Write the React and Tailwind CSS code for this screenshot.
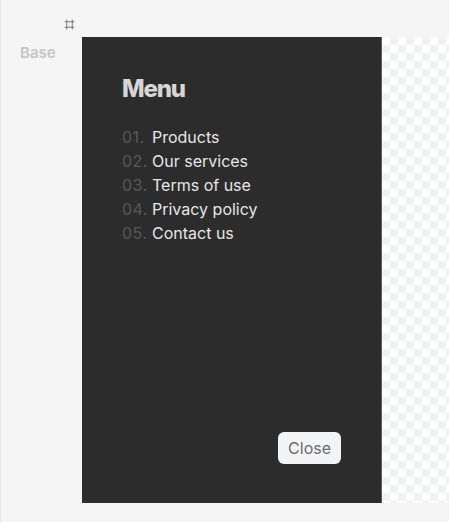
import { Frame } from "lucide-react";

const items = [
  { num: "01.", label: "Products" },
  { num: "02.", label: "Our services" },
  { num: "03.", label: "Terms of use" },
  { num: "04.", label: "Privacy policy" },
  { num: "05.", label: "Contact us" },
];

const App = () => {
  return (
    <div className="relative flex w-[449px] h-[522px] overflow-hidden border-l border-[#e4e4e4] bg-[#f5f5f5] font-['Inter',sans-serif]">
      {/* frame marker */}
      <Frame className="absolute left-[63px] top-[19px] w-[11px] h-[11px] text-[#707070]" strokeWidth={2} />

      <div className="w-[81px] shrink-0 pl-[19px] pt-[40px]">
        <span className="text-[15px] font-semibold text-[#c5c5c5]">Base</span>
      </div>

      <div className="flex flex-1 mt-[37px] h-[466px]">
        <div className="flex flex-col w-[300px] shrink-0 bg-[#2c2c2c] border-r border-[#5c5c5c] px-10 pt-[36px] pb-[39px]">
          <h2 className="text-2xl font-extrabold tracking-tighter text-[#d6d6d6]">Menu</h2>
          <ul className="mt-[20px] flex flex-col">
            {items.map((item) => (
              <li key={item.num} className="flex text-base leading-6">
                <span className="w-[30px] shrink-0 tracking-wide text-[#585858]">{item.num}</span>
                <span className="text-[#e6e6e6]">{item.label}</span>
              </li>
            ))}
          </ul>
          <div className="mt-auto flex justify-end">
            <button className="rounded-md bg-[#f3f4f6] px-[10px] py-1 text-base text-[#6b6b6b]">
              Close
            </button>
          </div>
        </div>
        <div className="flex-1 bg-[conic-gradient(#f0f1f5_25%,#ffffff_0_50%,#f0f1f5_0_75%,#ffffff_0)] bg-[length:16px_16px]" />
      </div>
    </div>
  );
};

export default App;
